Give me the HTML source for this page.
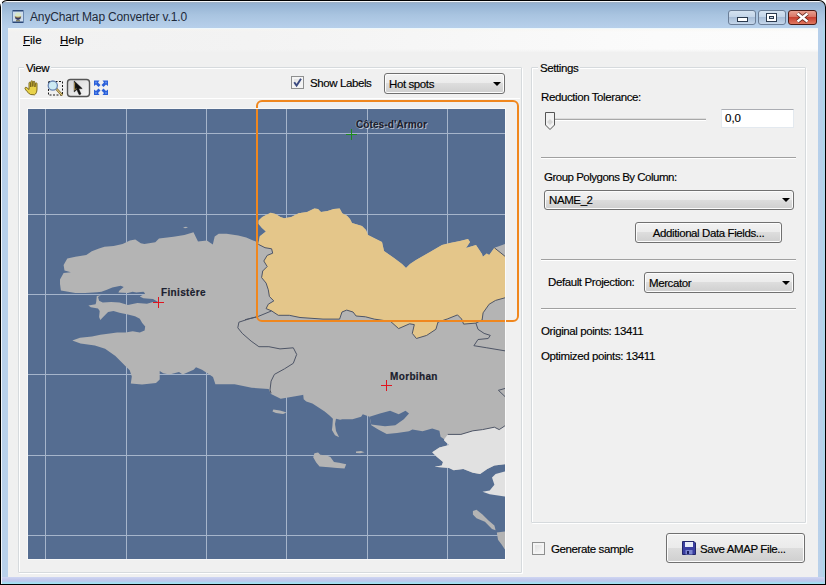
<!DOCTYPE html>
<html><head><meta charset="utf-8">
<style>
*{margin:0;padding:0;box-sizing:border-box}
html,body{width:826px;height:585px;overflow:hidden;background:#fff}
body{position:relative;font-family:"Liberation Sans",sans-serif;font-size:11px;color:#000;-webkit-text-stroke:0.15px #000}
.a{position:absolute}
.win{left:0;top:0;width:826px;height:585px;background:#000;border-radius:7px 7px 0 0}
.frame{left:1px;top:1px;width:824px;height:583px;border-radius:6px 6px 0 0;
 background:linear-gradient(to bottom,#f4f7fa 0,#f4f7fa 1px,#9fb0c2 1px,#95b3d3 3px,#a9c4e0 14px,#b6cfea 26px,#b9d1ea 100%)}
.frame2{left:1px;top:1px;width:1px;height:583px;background:#f2f6fa}
.frame3{left:823px;top:27px;width:1px;height:557px;background:#a8d8e8}
.client{left:8px;top:28px;width:810px;height:549px;background:#f0f0f0}
.menubar{left:8px;top:28px;width:810px;height:24px;background:linear-gradient(to bottom,#eef8fc 0,#eef8fc 1px,rgba(248,246,240,.6) 1px,rgba(248,246,240,0) 4px,rgba(240,240,240,0) 21px,rgba(240,240,240,.8) 24px),linear-gradient(to right,#f1f1f1 0,#f3f3f3 30%,#f6f6f6 50%,#fbfbfb 80%,#fcfcfc 100%)}
.t{position:absolute;white-space:nowrap;font-size:11.5px;line-height:13px;letter-spacing:-0.4px}
.gb{position:absolute;border:1px solid #d6dadd;box-shadow:inset 1px 1px 0 #fff, 1px 1px 0 #fff;border-radius:1px}
.lbl{position:absolute;background:#f0f0f0;padding:0 2px;white-space:nowrap;font-size:11.5px;line-height:13px;letter-spacing:-0.4px}
.sep{position:absolute;height:2px;border-top:1px solid #a0a0a0;border-bottom:1px solid #fff}
.dd{position:absolute;border:1px solid #707070;border-radius:3px;background:linear-gradient(to bottom,#f2f2f2 0,#ebebeb 50%,#dddddd 50%,#cfcfcf 100%);box-shadow:inset 0 0 0 1px #fcfcfc}
.dd .tx{position:absolute;left:4px;top:3px;font-size:11.5px;line-height:13px;white-space:nowrap;letter-spacing:-0.4px}
.dd .ar{position:absolute;width:0;height:0;border-left:4px solid transparent;border-right:4px solid transparent;border-top:4px solid #000}
.btn{position:absolute;border:1px solid #707070;border-radius:3px;background:linear-gradient(to bottom,#f2f2f2 0,#ebebeb 50%,#dddddd 50%,#cfcfcf 100%);box-shadow:inset 0 0 0 1px #fcfcfc;text-align:center;white-space:nowrap;font-size:11.5px;letter-spacing:-0.4px}
.cb{position:absolute;width:13px;height:13px;border:1px solid #8e8f8f;background:linear-gradient(135deg,#dcdcdc,#fbfbfb);box-shadow:inset 0 0 0 2px #f4f4f4}
.lab{font-size:10px;font-weight:bold;color:#1c2232;letter-spacing:0.35px;line-height:12px;white-space:nowrap}
</style></head><body>
<div class="a win"></div>
<div class="a frame"></div>
<div class="a frame2"></div>
<div class="a frame3"></div>
<div class="a" style="left:2px;top:577px;width:822px;height:7px;background:linear-gradient(to bottom,#cfd6f2 0,#c2c8ec 40%,#bcc8ec 60%,#a6dcf0 80%,#a0e4f4 100%)"></div>
<div class="a" style="left:8px;top:28px;width:1px;height:549px;background:#e6f4fa"></div>
<div class="a client"></div>
<div class="a menubar"></div>

<!-- title -->
<svg class="a" style="left:11px;top:9px" width="15" height="15" viewBox="11 9 15 15">
<rect x="12" y="10" width="12" height="13" fill="#cddcec"/>
<rect x="12" y="10" width="12" height="1.5" fill="#2d4a7a"/>
<rect x="12" y="21.5" width="12" height="1.5" fill="#2d4a7a"/>
<rect x="12" y="10" width="1" height="13" fill="#6a88b0"/>
<rect x="23" y="10" width="1" height="13" fill="#6a88b0"/>
<ellipse cx="18" cy="16" rx="3.2" ry="3.6" fill="#d8e6c8"/>
<path d="M14.8 16.5 Q18 18 21.2 16.5 Q21 19.5 18 20 Q15 19.5 14.8 16.5Z" fill="#3a3a62"/>
<path d="M15 16.8 Q18 17.6 21 16.8" stroke="#b89a48" stroke-width="0.9" fill="none"/>
<rect x="16" y="20.3" width="4" height="1" fill="#6a6030"/>
</svg>
<div class="t" style="left:30px;top:10px;font-size:12px;line-height:15px;letter-spacing:-0.15px;color:#1e2a3a;-webkit-text-stroke:0">AnyChart Map Converter v.1.0</div>

<!-- window buttons -->
<div class="a" style="left:728px;top:10px;width:28px;height:15px;border:1px solid #6a7d96;border-radius:3px;background:linear-gradient(to bottom,#d4e2f0 0,#c2d4e8 50%,#a8bed8 50%,#c4d6ea 100%)"></div>
<div class="a" style="left:737px;top:17px;width:11px;height:5px;border:1px solid #2b3a4e;background:#fff"></div>
<div class="a" style="left:758px;top:10px;width:28px;height:15px;border:1px solid #6a7d96;border-radius:3px;background:linear-gradient(to bottom,#d4e2f0 0,#c2d4e8 50%,#a8bed8 50%,#c4d6ea 100%)"></div>
<div class="a" style="left:766px;top:13px;width:11px;height:9px;border:1px solid #2b3a4e;background:#fff"></div>
<div class="a" style="left:769px;top:16px;width:5px;height:3px;border:1px solid #2b3a4e;background:#c8d4e0"></div>
<div class="a" style="left:788px;top:10px;width:29px;height:15px;border:1px solid #4a1a14;border-radius:3px;background:linear-gradient(to bottom,#e8a090 0,#d87060 50%,#c84030 50%,#e07860 100%)"></div>
<svg class="a" style="left:795px;top:12px" width="15" height="11" viewBox="0 0 15 11"><path d="M2.5 1.5 L12.5 9.5 M12.5 1.5 L2.5 9.5" stroke="#5a2018" stroke-width="4"/><path d="M2.5 1.5 L12.5 9.5 M12.5 1.5 L2.5 9.5" stroke="#fff" stroke-width="2.4"/></svg>

<!-- menu -->
<div class="t" style="left:23px;top:34px;letter-spacing:0"><span style="text-decoration:underline">F</span>ile</div>
<div class="t" style="left:60px;top:34px;letter-spacing:0"><span style="text-decoration:underline">H</span>elp</div>

<!-- View group -->
<div class="gb" style="left:18px;top:67px;width:504px;height:506px"></div>
<div class="lbl" style="left:24px;top:62px">View</div>

<!-- Settings group -->
<div class="gb" style="left:531px;top:67px;width:275px;height:456px"></div>
<div class="lbl" style="left:538px;top:62px">Settings</div>

<!--MAP-->
<svg class="a" style="left:28px;top:109px" width="477" height="450" viewBox="28 109 477 450" shape-rendering="crispEdges">
<rect x="28" y="109" width="477" height="450" fill="#556d91"/>
<rect x="45" y="109" width="1" height="450" fill="#a6b5cb"/>
<rect x="126" y="109" width="1" height="450" fill="#a6b5cb"/>
<rect x="206" y="109" width="1" height="450" fill="#a6b5cb"/>
<rect x="286" y="109" width="1" height="450" fill="#a6b5cb"/>
<rect x="367" y="109" width="1" height="450" fill="#a6b5cb"/>
<rect x="447" y="109" width="1" height="450" fill="#a6b5cb"/>
<rect x="28" y="133" width="477" height="1" fill="#a6b5cb"/>
<rect x="28" y="214" width="477" height="1" fill="#a6b5cb"/>
<rect x="28" y="294" width="477" height="1" fill="#a6b5cb"/>
<rect x="28" y="374" width="477" height="1" fill="#a6b5cb"/>
<rect x="28" y="455" width="477" height="1" fill="#a6b5cb"/>
<rect x="28" y="535" width="477" height="1" fill="#a6b5cb"/>
<g shape-rendering="geometricPrecision">
<polygon points="60.9,290.4 60.0,284.0 60.0,279.5 63.6,273.1 70.9,272.2 64.5,270.4 63.6,265.0 67.3,258.6 75.4,256.8 86.3,255.0 91.8,251.3 99.0,248.6 104.5,246.8 113.6,245.9 122.6,244.1 129.9,240.4 135.3,239.5 140.8,243.2 144.4,244.1 155.3,242.3 159.0,238.6 173.5,236.8 184.4,235.0 193.5,232.3 195.3,235.9 198.0,241.5 206.9,240.6 212.8,244.5 214.7,236.6 218.7,233.7 226.5,233.7 238.3,235.6 246.2,237.6 253.1,240.6 256.0,241.5 258.3,244.3 259.8,236.3 265.9,231.5 262.0,228.0 258.6,224.0 258.6,220.6 262.3,216.9 267.1,214.5 270.7,212.7 275.6,213.9 280.4,217.0 284.1,218.2 291.3,217.0 298.6,213.3 307.1,212.1 314.3,208.5 318.0,209.1 321.0,212.1 327.6,210.9 333.7,209.1 339.7,208.5 342.2,213.3 347.0,215.7 350.0,219.0 352.0,223.0 362.0,226.0 366.0,230.0 368.0,235.0 372.0,237.0 382.0,242.0 384.0,251.0 394.0,258.0 402.0,264.0 406.0,268.0 410.0,264.0 416.0,260.0 430.0,252.0 442.0,245.0 450.0,243.0 460.0,241.0 468.0,239.0 470.0,242.0 466.0,248.0 476.0,245.0 482.0,254.0 482.8,256.8 486.7,253.6 489.2,254.9 494.4,247.8 499.5,245.9 504.9,244.0 512.0,243.0 512.0,464.0 504.7,464.3 494.4,465.5 487.3,469.1 480.1,473.9 472.9,472.7 463.3,469.1 453.7,470.3 449.0,467.9 434.6,466.7 441.8,465.5 443.0,461.9 437.0,457.1 432.2,452.3 439.4,447.5 449.0,445.1 444.2,440.4 444.2,439.2 440.6,436.8 439.4,430.8 432.2,428.4 422.6,431.3 412.4,429.6 409.0,431.3 397.0,433.0 386.7,433.9 378.2,429.6 371.3,425.3 369.6,416.8 362.8,414.2 361.1,416.8 352.5,419.3 342.2,419.3 340.1,419.8 336.0,418.8 335.0,423.9 336.0,431.1 339.1,437.3 335.0,435.2 331.9,430.1 332.4,426.0 332.9,418.8 329.8,415.7 324.7,411.6 318.6,407.5 312.4,403.4 306.3,401.4 303.7,399.3 303.2,394.7 302.5,395.1 295.3,396.3 280.7,398.7 271.0,393.9 268.6,389.0 251.7,387.8 234.7,384.2 215.4,384.2 213.0,377.0 209.3,374.5 202.0,369.7 196.0,367.3 193.6,369.7 182.7,374.5 179.0,372.1 169.4,374.5 163.3,373.3 159.7,370.9 159.7,379.4 156.0,383.0 142.0,384.6 130.8,383.6 131.8,376.4 129.7,370.3 125.6,366.2 115.4,355.9 105.1,348.7 94.9,345.6 80.5,343.6 72.3,340.5 80.0,337.8 92.0,336.6 100.3,334.8 109.9,333.6 117.1,332.4 125.5,332.4 132.7,331.2 139.8,332.4 144.6,330.6 145.2,326.5 142.2,322.9 139.8,318.7 135.0,316.3 127.9,314.5 119.5,312.7 113.5,310.9 108.1,312.1 103.9,316.3 100.3,319.9 99.1,316.9 99.7,310.9 98.0,308.5 90.8,307.3 88.4,305.5 95.6,304.3 96.2,301.9 96.8,296.0 100.9,295.3 98.0,297.1 99.1,300.7 102.7,302.5 111.1,301.9 119.5,302.5 127.9,304.9 137.4,303.1 147.0,303.7 153.0,301.9 158.5,302.3 153.0,298.9 143.4,298.3 139.8,296.5 145.2,293.5 143.4,291.8 136.2,292.4 132.7,291.8 127.9,293.0 118.3,292.4 119.5,290.6 123.7,287.0 120.7,285.8 112.3,287.6 107.5,289.4 101.5,291.8 97.2,292.2 85.0,293.0 75.4,293.1" fill="#b4b4b4"/>
<polygon points="314.4,453.2 318.1,452.6 320.3,454.8 326.8,455.5 330.4,457.0 334.0,462.0 339.1,462.8 346.2,464.2 344.5,468.6 337.0,468.0 329.0,467.3 319.5,466.6 316.2,462.6 313.2,457.3" fill="#b4b4b4"/>
<polygon points="273.3,409.5 280.0,410.5 286.7,412.5 283.0,414.0 276.0,413.0 272.5,411.5" fill="#b4b4b4"/>
<polygon points="356.0,451.5 361.0,451.0 364.5,452.2 360.0,453.2 356.0,453.0" fill="#b4b4b4"/>
<polygon points="472.9,511.0 476.5,509.8 482.5,514.6 488.5,520.6 494.4,525.4 495.6,530.2 492.0,529.0 484.9,521.8 476.5,518.2 472.9,514.6" fill="#b4b4b4"/>
<polygon points="496.8,532.5 504.7,531.4 512.0,531.0 512.0,552.0 504.7,549.3 501.6,544.5 498.0,539.7" fill="#b4b4b4"/>
<polygon points="183.0,227.5 186.0,226.8 188.0,227.5 185.0,228.3" fill="#b4b4b4"/>
<polygon points="369.6,416.8 379.9,413.4 390.1,410.8 398.7,414.2 405.5,410.8 409.0,413.4 403.8,419.3 395.3,425.3 385.0,426.2 371.3,424.5" fill="#556d91"/>
<polygon points="258.3,244.3 259.8,236.3 265.9,231.5 262.0,228.0 258.6,224.0 258.6,220.6 262.3,216.9 267.1,214.5 270.7,212.7 275.6,213.9 280.4,217.0 284.1,218.2 291.3,217.0 298.6,213.3 307.1,212.1 314.3,208.5 318.0,209.1 321.0,212.1 327.6,210.9 333.7,209.1 339.7,208.5 342.2,213.3 347.0,215.7 350.0,219.0 352.0,223.0 362.0,226.0 366.0,230.0 368.0,235.0 372.0,237.0 382.0,242.0 384.0,251.0 394.0,258.0 402.0,264.0 406.0,268.0 410.0,264.0 416.0,260.0 430.0,252.0 442.0,245.0 450.0,243.0 460.0,241.0 468.0,239.0 470.0,242.0 466.0,248.0 476.0,245.0 482.0,254.0 482.8,256.8 486.7,253.6 489.2,254.9 494.4,247.8 504.9,256.2 512.0,258.0 512.0,297.5 504.9,297.8 495.6,300.4 489.2,304.2 483.1,312.8 482.1,320.0 475.9,323.1 463.6,324.1 461.6,319.0 457.5,314.9 447.2,319.0 438.0,322.1 435.9,329.3 426.7,335.4 416.4,338.5 412.3,333.4 414.3,324.6 409.6,323.8 398.6,328.6 390.7,321.5 374.2,319.1 365.5,316.8 356.1,316.0 353.0,312.0 346.7,310.1 342.0,312.0 339.6,319.1 331.0,319.1 323.0,319.1 300.0,317.5 289.3,315.3 278.3,315.3 271.6,310.9 266.1,308.6 268.3,304.2 273.8,300.9 269.4,296.5 268.3,289.8 266.1,283.1 261.6,277.6 262.7,271.0 267.2,266.5 263.8,261.0 267.2,255.4 272.7,253.2 271.6,248.8 265.0,247.7 258.3,244.3" fill="#e4c68a"/>
<polygon points="447.7,434.4 460.9,434.4 472.9,430.8 482.5,429.6 494.4,427.2 499.2,429.6 504.7,426.0 512.0,426.0 512.0,464.0 504.7,464.3 494.4,465.5 487.3,469.1 480.1,473.9 472.9,472.7 463.3,469.1 453.7,470.3 449.0,467.9 434.6,466.7 441.8,465.5 443.0,461.9 437.0,457.1 432.2,452.3 439.4,447.5 449.0,445.1 444.2,440.4 444.2,439.2" fill="#e1e1e1"/>
<polygon points="512.0,471.0 504.7,471.5 495.6,473.9 492.0,477.5 494.4,484.7 489.7,490.6 482.5,491.8 489.7,494.2 504.7,496.6 512.0,497.0" fill="#e1e1e1"/>
<polyline points="512.0,297.5 504.9,297.8 495.6,300.4 489.2,304.2 483.1,312.8 482.1,320.0 475.9,323.1 463.6,324.1 461.6,319.0 457.5,314.9 447.2,319.0 438.0,322.1 435.9,329.3 426.7,335.4 416.4,338.5 412.3,333.4 414.3,324.6 409.6,323.8 398.6,328.6 390.7,321.5 374.2,319.1 365.5,316.8 356.1,316.0 353.0,312.0 346.7,310.1 342.0,312.0 339.6,319.1 331.0,319.1 323.0,319.1 300.0,317.5 289.3,315.3 278.3,315.3 271.6,310.9 266.1,308.6 268.3,304.2 273.8,300.9 269.4,296.5 268.3,289.8 266.1,283.1 261.6,277.6 262.7,271.0 267.2,266.5 263.8,261.0 267.2,255.4 272.7,253.2 271.6,248.8 265.0,247.7 258.3,244.3" fill="none" stroke="#4e5566" stroke-width="1"/>
<polyline points="256.5,317.0 248.9,318.9 238.9,322.2 237.8,327.8 242.2,333.3 251.1,341.1 258.9,346.7 268.9,346.7 280.0,348.9 293.3,347.8 296.7,354.4 293.3,363.3 284.4,368.9 274.4,374.4 271.1,381.1 270.0,390.0 271.1,393.3" fill="none" stroke="#4e5566" stroke-width="1"/>
<polyline points="245.0,319.7 258.3,316.4 271.6,310.9" fill="none" stroke="#4e5566" stroke-width="1"/>
<polyline points="475.9,323.1 478.0,329.3 484.1,333.4 490.3,335.4 488.2,338.5 478.0,339.5 473.9,345.7 486.2,347.7 512.0,352.0" fill="none" stroke="#4e5566" stroke-width="1"/>
<polyline points="447.7,434.4 460.9,434.4 472.9,430.8 482.5,429.6 494.4,427.2 499.2,429.6 504.7,426.0 512.0,426.0" fill="none" stroke="#4e5566" stroke-width="1"/>
<polyline points="506.0,388.2 498.4,390.3 506.0,397.5" fill="none" stroke="#4e5566" stroke-width="1"/>
<polyline points="494.4,247.8 504.9,256.2 512.0,258.0" fill="none" stroke="#4e5566" stroke-width="1"/>
</g>
</svg>
<!--/MAP-->
<!--OVL-->
<svg class="a" style="left:0;top:0" width="826" height="585" viewBox="0 0 826 585">
<g stroke="#e0141e" stroke-width="1" shape-rendering="crispEdges">
<path d="M153 302.5H164M158.5 297V308"/>
<path d="M381 385.5H392M386.5 380V391"/>
</g>
<path d="M346 134.5H357M351.5 129V140" stroke="#1e8a1e" stroke-width="1.3" shape-rendering="crispEdges"/>
<rect x="257" y="101" width="261" height="220" rx="5" ry="5" fill="none" stroke="#f0871e" stroke-width="2"/>
</svg>
<div class="a lab" style="left:161px;top:287px">Finist&egrave;re</div>
<div class="a lab" style="left:390px;top:371px">Morbihan</div>
<div class="a lab" style="left:356px;top:119px;letter-spacing:0.1px;text-shadow:1px 1px 0 rgba(255,255,255,.55),-1px 0 0 rgba(255,255,255,.25)">C&ocirc;tes-d'Armor</div>
<!--/OVL-->
<!--CTRL-->
<!-- toolbar -->
<svg class="a" style="left:22px;top:77px" width="90" height="22" viewBox="22 77 90 22">
<path d="M30.5 94.5 C28 93 25.5 90 25 88.5 C24.8 87.3 26 87 27 87.8 L29 89.5 L29 83 C29 82 30.5 82 30.6 83 L30.8 87 L31 81.5 C31 80.5 32.6 80.5 32.7 81.5 L32.8 86.5 L33.2 82 C33.3 81 34.8 81 34.8 82 L34.9 87 L35.5 83.5 C35.6 82.6 37 82.7 37 83.6 L37 89 C37 92 36 94 34.5 94.8 Z" fill="#e8d24a" stroke="#6e5a12" stroke-width="0.9"/>
<rect x="48.5" y="81.5" width="14" height="13.5" fill="none" stroke="#1a1a1a" stroke-width="1" stroke-dasharray="2 1.5"/>
<path d="M56.5 89 L61.5 94.5" stroke="#8a7030" stroke-width="2.6" stroke-linecap="round"/>
<path d="M56.5 89 L61.5 94.5" stroke="#e8d890" stroke-width="1" stroke-linecap="round"/>
<circle cx="52.8" cy="85.6" r="4.6" fill="#cdeaf4" stroke="#6a86b4" stroke-width="1.3"/>
<defs><linearGradient id="pb" x1="0" y1="0" x2="1" y2="1"><stop offset="0" stop-color="#d6d6d6"/><stop offset="1" stop-color="#f6f6f6"/></linearGradient></defs><rect x="67.5" y="79.5" width="22" height="17" rx="3" fill="url(#pb)" stroke="#555" stroke-width="1.4"/>
<path d="M74.2 81 L74.2 92 L76.8 89.6 L79.2 94.8 L81 94 L78.7 88.8 L82.2 88.6 Z" fill="#111" stroke="#111" stroke-width="0.5"/>
<path d="M74.6 82.5 L74.6 90 L76.5 88.3" fill="none" stroke="#b89a50" stroke-width="0.9"/>
<g fill="#2a5fd8">
<path d="M94 80.5 L99.5 80.5 L98 82.5 L100.5 85 L98.5 87 L96 84.5 L94 86 Z"/>
<path d="M108 80.5 L102.5 80.5 L104 82.5 L101.5 85 L103.5 87 L106 84.5 L108 86 Z"/>
<path d="M94 95 L99.5 95 L98 93 L100.5 90.5 L98.5 88.5 L96 91 L94 89.5 Z"/>
<path d="M108 95 L102.5 95 L104 93 L101.5 90.5 L103.5 88.5 L106 91 L108 89.5 Z"/>
</g>
<g fill="#6f9cf4" opacity="0.8"><circle cx="96" cy="82.5" r="1"/><circle cx="106" cy="82.5" r="1"/><circle cx="96" cy="93" r="1"/><circle cx="106" cy="93" r="1"/></g>
</svg>
<div class="a" style="left:20px;top:98px;width:500px;height:1px;background:#fff"></div>

<div class="cb" style="left:291px;top:76px"></div>
<svg class="a" style="left:291px;top:76px" width="13" height="13" viewBox="0 0 13 13"><path d="M3.2 6.2 L5.6 9.6 L10 2.8" fill="none" stroke="#3b4a80" stroke-width="1.9"/></svg>
<div class="t" style="left:310px;top:77px">Show Labels</div>
<div class="dd" style="left:384px;top:73px;width:121px;height:21px"><div class="tx" style="left:4px;top:4px">Hot spots</div><div class="ar" style="left:108px;top:8px"></div></div>

<!-- map panel border highlight -->
<div class="a" style="left:27px;top:108px;width:479px;height:452px;border:1px solid #f8f8f8;border-right-color:#fafafa"></div>

<!-- settings -->
<div class="t" style="left:541px;top:91px">Reduction Tolerance:</div>
<div class="a" style="left:554px;top:119px;width:152px;height:1px;background:#a8a8a8"></div>
<div class="a" style="left:554px;top:120px;width:152px;height:1px;background:#fff"></div>
<div class="a" style="left:554px;top:118px;width:152px;height:1px;background:#dcdcdc"></div>
<svg class="a" style="left:544px;top:111px" width="12" height="20" viewBox="0 0 12 20"><path d="M1.5 1.5 H10.5 V14 L6 18.5 L1.5 14 Z" fill="#f2f2f2" stroke="#555" stroke-width="1"/><path d="M3 11 L6 8 L9 11 L6 14 Z" fill="#d8d8d8"/></svg>
<div class="a" style="left:721px;top:109px;width:73px;height:19px;background:#fff;border:1px solid #e3e9ef;border-top-color:#abadb3"></div>
<div class="t" style="left:725px;top:112px;letter-spacing:0">0,0</div>

<div class="sep" style="left:541px;top:157px;width:255px"></div>
<div class="t" style="left:544px;top:171px;letter-spacing:-0.5px">Group Polygons By Column:</div>
<div class="dd" style="left:544px;top:190px;width:250px;height:20px"><div class="tx" style="left:4px;top:3px">NAME_2</div><div class="ar" style="left:237px;top:7px"></div></div>
<div class="btn" style="left:635px;top:222px;width:147px;height:21px;line-height:20px">Additional Data Fields...</div>

<div class="sep" style="left:541px;top:259px;width:255px"></div>
<div class="t" style="left:548px;top:276px">Default Projection:</div>
<div class="dd" style="left:644px;top:272px;width:150px;height:21px"><div class="tx" style="left:4px;top:4px">Mercator</div><div class="ar" style="left:137px;top:8px"></div></div>
<div class="sep" style="left:541px;top:308px;width:255px"></div>

<div class="t" style="left:541px;top:325px">Original points: 13411</div>
<div class="t" style="left:541px;top:350px">Optimized points: 13411</div>

<div class="cb" style="left:532px;top:542px"></div>
<div class="t" style="left:551px;top:543px">Generate sample</div>
<div class="btn" style="left:666px;top:533px;width:139px;height:30px"></div>
<svg class="a" style="left:682px;top:541px" width="14" height="14" viewBox="0 0 14 14"><path d="M0.5 0.5 H12 L13.5 2 V13.5 H0.5 Z" fill="#3a3ea0" stroke="#22266a" stroke-width="1"/><rect x="3" y="1" width="8" height="5" fill="#e8ecf8"/><rect x="3.5" y="9" width="7" height="4.5" fill="#7c86d0"/><rect x="5" y="10" width="2" height="3" fill="#1c2060"/></svg>
<div class="t" style="left:700px;top:543px">Save AMAP File...</div>
<!--/CTRL-->
</body></html>
